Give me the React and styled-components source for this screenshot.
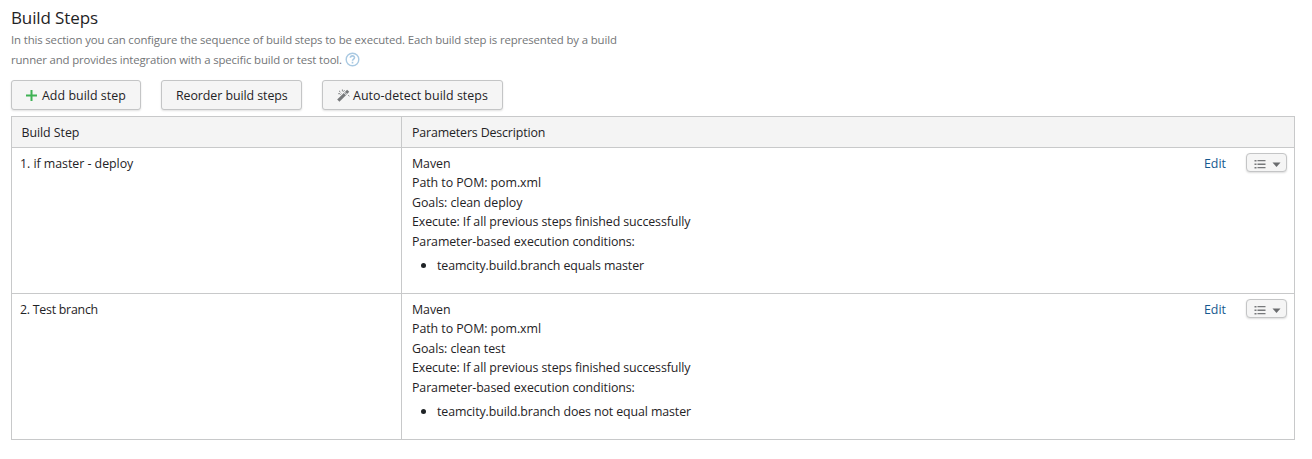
import React from "react";
import styled, { createGlobalStyle } from "styled-components";

const Global = createGlobalStyle`
  * { box-sizing: border-box; }
  body {
    margin: 0;
    background: #fff;
    color: #1f2326;
    font: 12.4px/19.5px "Open Sans", "Noto Sans", sans-serif;
  }
`;

const Page = styled.main`
  padding: 6px 17px 0 11px;
`;

const Title = styled.h2`
  margin: 0;
  font-size: 17px;
  font-weight: 400;
  line-height: 24px;
  letter-spacing: -0.12px;
`;

const Note = styled.p`
  margin: 0;
  color: #737577;
  font-size: 11.4px;
  line-height: 20px;
  white-space: nowrap;
`;

const NoteLine = styled.span`
  display: flex;
  align-items: center;
  height: 20px;
  letter-spacing: ${(p) => p.$track || 0}px;
`;

const HelpIcon = styled.svg`
  margin: -2px 0 0 3.5px;
`;

const Toolbar = styled.div`
  display: flex;
  gap: 20px;
  padding: 10px 0 6px;
`;

const Button = styled.button`
  display: flex;
  align-items: center;
  justify-content: flex-start;
  width: ${(p) => p.$width}px;
  height: 30px;
  padding: 1px 0 0 14px;
  border: 1px solid #c4c5c6;
  border-radius: 3px;
  background: #f5f5f5;
  box-shadow: 0 1px 2px rgba(0, 0, 0, 0.12);
  color: #1f2326;
  font: inherit;
  letter-spacing: ${(p) => p.$track || 0}px;
  white-space: nowrap;
  svg { flex: none; margin: -1px ${(p) => p.$iconGap || 0}px 0 0; }
`;

const Table = styled.div`
  border: 1px solid #c8c9ca;
`;

const Row = styled.div`
  display: grid;
  grid-template-columns: 390px 1fr;
  height: 146px;
  & + & { border-top: 1px solid #c8c9ca; }
`;

const HeaderRow = styled(Row)`
  height: 30px;
  background: #f4f4f4;
  line-height: 32px;
  & + ${Row} { border-top: 1px solid #c8c9ca; }
`;

const NameCell = styled.div`
  padding: ${(p) => (p.$head ? "0 9.5px" : "5.5px 8px 0")};
  border-right: 1px solid #c8c9ca;
`;

const DetailCell = styled.div`
  display: flex;
  justify-content: space-between;
  padding: ${(p) => (p.$head ? "0 10px" : "5.5px 7px 0 10px")};
`;

const Line = styled.div`
  letter-spacing: ${(p) => p.$track || 0}px;
  white-space: nowrap;
`;

const Conditions = styled.ul`
  margin: 4.5px 0 0;
  padding: 0;
  list-style: none;
`;

const Condition = styled.li`
  display: flex;
  align-items: center;
  letter-spacing: ${(p) => p.$track || 0}px;
  &::before {
    content: "";
    width: 5px;
    height: 5px;
    margin: 0 11px 0 9px;
    border-radius: 50%;
    background: #1f2326;
  }
`;

const Actions = styled.div`
  display: flex;
  align-items: flex-start;
  gap: 20px;
`;

const EditLink = styled.a`
  color: #15598f;
`;

const MenuButton = styled.button`
  display: flex;
  align-items: center;
  width: 41px;
  height: 19px;
  margin-top: -0.5px;
  padding: 3px 0 0 7px;
  border: 1px solid #c4c5c6;
  border-radius: 4px;
  background: #f5f5f5;
  box-shadow: 0 1px 2px rgba(0, 0, 0, 0.14);
`;

const steps = [
  {
    name: "1. if master - deploy",
    nameTrack: -0.04,
    lines: ["Maven", "Path to POM: pom.xml", "Goals: clean deploy"],
    condition: "teamcity.build.branch equals master",
  },
  {
    name: "2. Test branch",
    nameTrack: -0.26,
    lines: ["Maven", "Path to POM: pom.xml", "Goals: clean test"],
    condition: "teamcity.build.branch does not equal master",
  },
];

const common = [
  "Execute: If all previous steps finished successfully",
  "Parameter-based execution conditions:",
];

const PlusIcon = () => (
  <svg width="11" height="11" viewBox="0 0 11 11">
    <path d="M5.5 0v11M0 5.5h11" stroke="#3fb254" strokeWidth="2" />
  </svg>
);

const WandIcon = () => (
  <svg width="13" height="13" viewBox="0 0 13 13" fill="none" stroke="#77797b">
    <path d="M1.3 11.7L7.9 5.1" stroke="#77797b" strokeWidth="3.1" />
    <path d="M8.4 4.6L11.2 1.8" strokeWidth="3" stroke="#77797b" />
    <path d="M8.2 3.2L10 5" stroke="#f5f5f5" strokeWidth="0.6" />
    <path d="M2 1.8l1.5 1.4M5.4 .5v1.8M7.6 1.2L6.3 2.7M1.2 4.7h1.8M3.4 5.6l1-1M11.2 6.3l1.2.9" strokeWidth="0.9" />
  </svg>
);

const StepMenu = () => (
  <MenuButton aria-label="Step actions">
    <svg width="28" height="9" viewBox="0 0 28 9" fill="#77797b">
      <path d="M0.5 0h2v1.4h-2zM3.5 0h8v1.3h-8zM0.5 3.6h2V5h-2zM3.5 3.6h8v1.3h-8zM0.5 7h2v1.4h-2zM3.5 7h8v1.3h-8z" />
      <path d="M18.5 2.5h8L22.5 7z" fill="#6a6c6e" />
    </svg>
  </MenuButton>
);

export default function App() {
  return (
    <>
      <Global />
      <Page>
        <Title>Build Steps</Title>
        <Note>
          <NoteLine $track={-0.138}>
            In this section you can configure the sequence of build steps to be executed. Each build step is represented by a build
          </NoteLine>
          <NoteLine $track={-0.147}>
            runner and provides integration with a specific build or test tool.
            <HelpIcon width="15" height="15" viewBox="0 0 15 15" fill="none" stroke="#a9c9e2">
              <circle cx="7.5" cy="7.5" r="6.3" strokeWidth="1.4" />
              <path d="M5.4 5.8C5.5 3.2 9.6 3.3 9.5 5.7C9.4 7 7.5 7.2 7.5 8.8M7.5 9.8v1.6" strokeWidth="1.6" />
            </HelpIcon>
          </NoteLine>
        </Note>
        <Toolbar>
          <Button $width={130} $iconGap={5} $track={0.04}><PlusIcon />Add build step</Button>
          <Button $width={141} $track={-0.07}>Reorder build steps</Button>
          <Button $width={181} $iconGap={3} $track={0.05}><WandIcon />Auto-detect build steps</Button>
        </Toolbar>
        <Table>
          <HeaderRow>
            <NameCell $head><Line $track={-0.06}>Build Step</Line></NameCell>
            <DetailCell $head><Line $track={-0.15}>Parameters Description</Line></DetailCell>
          </HeaderRow>
          {steps.map((step) => (
            <Row key={step.name}>
              <NameCell><Line $track={step.nameTrack}>{step.name}</Line></NameCell>
              <DetailCell>
                <div>
                  {step.lines.map((text) => (
                    <Line key={text} $track={-0.06}>{text}</Line>
                  ))}
                  {common.map((text) => (
                    <Line key={text} $track={-0.1}>{text}</Line>
                  ))}
                  <Conditions>
                    <Condition $track={-0.11}>{step.condition}</Condition>
                  </Conditions>
                </div>
                <Actions>
                  <EditLink>Edit</EditLink>
                  <StepMenu />
                </Actions>
              </DetailCell>
            </Row>
          ))}
        </Table>
      </Page>
    </>
  );
}
